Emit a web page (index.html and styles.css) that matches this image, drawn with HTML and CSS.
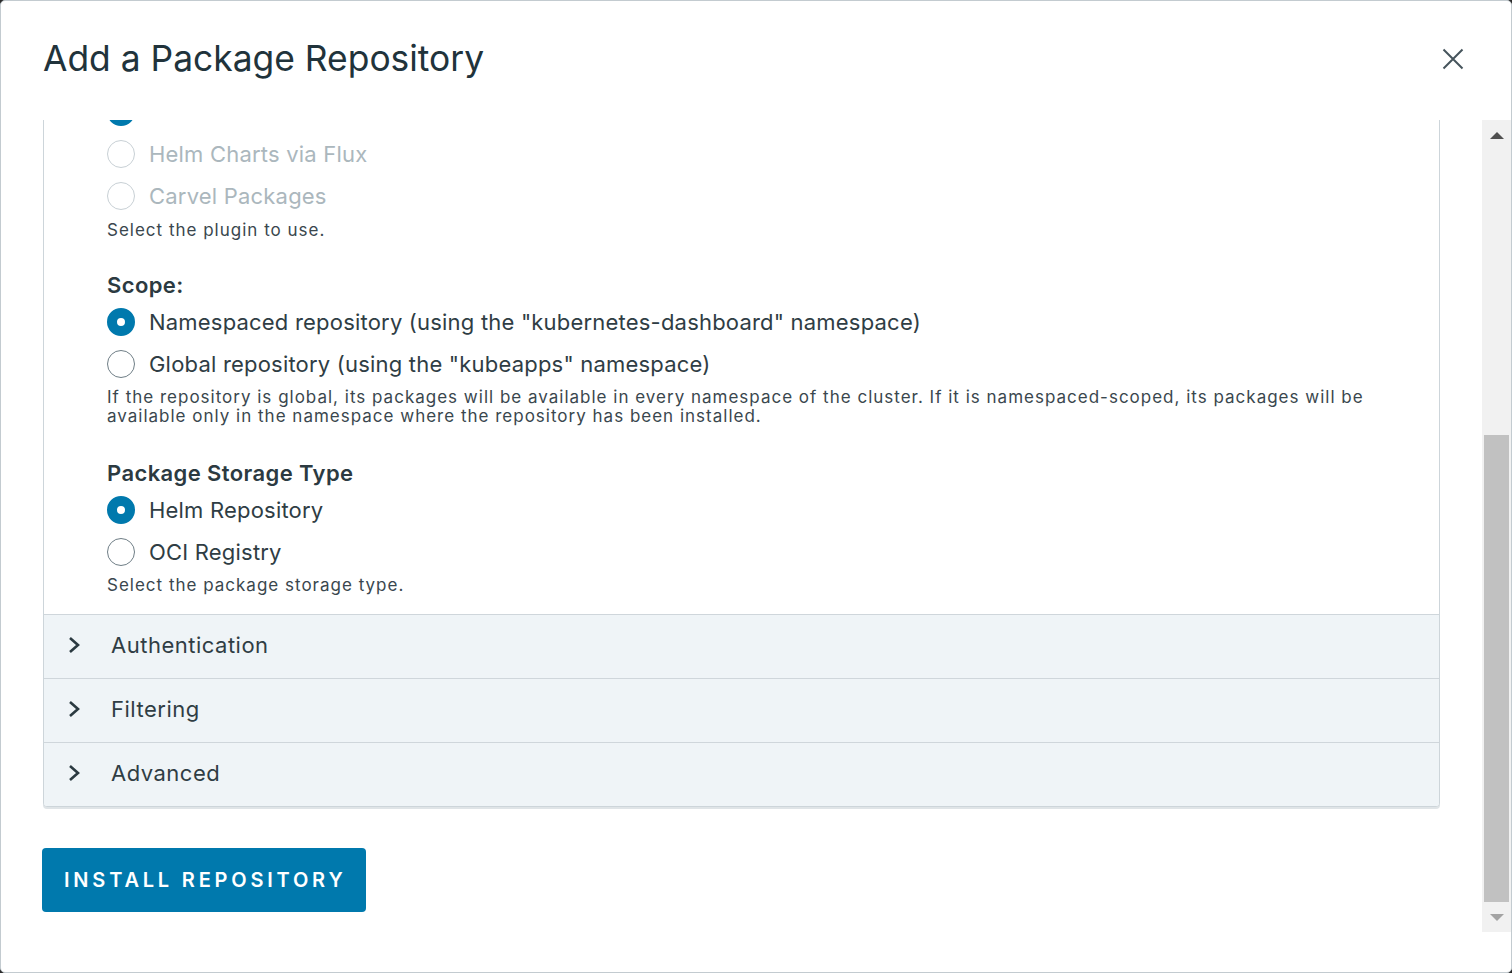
FILE: index.html
```html
<!DOCTYPE html>
<html lang="en">
<head>
<meta charset="utf-8">
<title>Add a Package Repository</title>
<link rel="stylesheet" href="styles.css">
</head>
<body>
<div class="modal">
  <header class="modal-header">
    <h1 class="modal-title">Add a Package Repository</h1>
    <button class="close" aria-label="Close">
      <svg width="24" height="24" viewBox="0 0 24 24"><path d="M2.5 2.5L21.5 21.5M21.5 2.5L2.5 21.5" stroke="#46545c" stroke-width="2" fill="none"/></svg>
    </button>
  </header>
  <div class="modal-body">
    <div class="viewport">
      <div class="scroll-content">
        <section class="card">
          <div class="card-block">
            <div class="options">
              <label class="radio-row"><span class="radio checked"></span><span class="radio-label">Helm Charts</span></label>
              <label class="radio-row"><span class="radio disabled"></span><span class="radio-label is-disabled">Helm Charts via Flux</span></label>
              <label class="radio-row"><span class="radio disabled"></span><span class="radio-label is-disabled">Carvel Packages</span></label>
            </div>
            <div class="helper">Select the plugin to use.</div>

            <div class="field-label scope-label">Scope:</div>
            <div class="options">
              <label class="radio-row"><span class="radio checked"></span><span class="radio-label">Namespaced repository (using the "kubernetes-dashboard" namespace)</span></label>
              <label class="radio-row"><span class="radio"></span><span class="radio-label">Global repository (using the "kubeapps" namespace)</span></label>
            </div>
            <div class="helper helper-wrap">If the repository is global, its packages will be available in every namespace of the cluster. If it is namespaced-scoped, its packages will be available only in the namespace where the repository has been installed.</div>

            <div class="field-label storage-label">Package Storage Type</div>
            <div class="options">
              <label class="radio-row"><span class="radio checked"></span><span class="radio-label">Helm Repository</span></label>
              <label class="radio-row"><span class="radio"></span><span class="radio-label">OCI Registry</span></label>
            </div>
            <div class="helper helper-last">Select the package storage type.</div>
          </div>

          <div class="acc-row">
            <svg class="chevron" width="12" height="18" viewBox="0 0 12 18"><path d="M2 2L10 9L2 16" stroke="#2b3a41" stroke-width="2.6" fill="none"/></svg>
            <span class="acc-title">Authentication</span>
          </div>
          <div class="acc-row">
            <svg class="chevron" width="12" height="18" viewBox="0 0 12 18"><path d="M2 2L10 9L2 16" stroke="#2b3a41" stroke-width="2.6" fill="none"/></svg>
            <span class="acc-title">Filtering</span>
          </div>
          <div class="acc-row">
            <svg class="chevron" width="12" height="18" viewBox="0 0 12 18"><path d="M2 2L10 9L2 16" stroke="#2b3a41" stroke-width="2.6" fill="none"/></svg>
            <span class="acc-title">Advanced</span>
          </div>
        </section>

        <button class="btn-primary">Install Repository</button>
      </div>
    </div>
    <div class="scrollbar">
      <div class="sb-btn"><span class="arrow-up"></span></div>
      <div class="sb-track"><div class="sb-thumb"></div></div>
      <div class="sb-btn"><span class="arrow-down"></span></div>
    </div>
  </div>
  <div class="modal-footer"></div>
</div>
</body>
</html>
```

FILE: styles.css
```css
html, body {
  margin: 0;
  padding: 0;
}

body {
  background: #2b2b2b;
  font-family: Inter, "Open Sans", sans-serif;
  color: #2f3d44;
}

.modal {
  box-sizing: border-box;
  height: 973px;
  border: 1px solid #c3cbd0;
  border-radius: 5px;
  background: #fff;
  display: flex;
  flex-direction: column;
  overflow: hidden;
}

.modal-header {
  box-sizing: border-box;
  height: 119px;
  flex: none;
  display: flex;
  align-items: center;
  justify-content: space-between;
  padding: 0 46px 4px 42px;
}

.modal-title {
  margin: 0;
  font-size: 35.4px;
  font-weight: 400;
  line-height: 46px;
  color: #21333b;
}

.close {
  width: 24px;
  height: 24px;
  border: 0;
  padding: 0;
  background: none;
  display: block;
}

.close svg {
  display: block;
}

.modal-body {
  flex: none;
  height: 812px;
  display: flex;
}

.viewport {
  flex: 1;
  overflow: hidden;
  padding: 0 42px;
}

.scroll-content {
  margin-top: -57px;
  display: flex;
  flex-direction: column;
  align-items: flex-start;
}

.card {
  align-self: stretch;
  border: 1px solid #cdd5da;
  border-radius: 4px;
  box-shadow: 0 2px 0 #dfe4e7;
  background: #fff;
  overflow: hidden;
}

.card-block {
  padding: 24px 24px 19px 63px;
}

.field-label {
  font-size: 22px;
  font-weight: 600;
  line-height: 26px;
  letter-spacing: 0.4px;
  color: #2c3a41;
}

.scope-label {
  margin-top: 32px;
}

.storage-label {
  margin-top: 34px;
}

.options {
  margin-top: 3px;
}

.radio-row {
  display: flex;
  align-items: center;
  gap: 14px;
  height: 42px;
}

.radio {
  box-sizing: border-box;
  width: 28px;
  height: 28px;
  border-radius: 50%;
  border: 1px solid #6f7e86;
  background: #fff;
  flex: none;
}

.radio.checked {
  border: 10px solid #0079ad;
}

.radio.disabled {
  border-color: #c8d0d5;
}

.radio-label {
  font-size: 22px;
  letter-spacing: 0.2px;
  color: #2f3d44;
}

.radio-label.is-disabled {
  color: #abb7bd;
}

.helper {
  margin-top: 3px;
  font-size: 17px;
  letter-spacing: 1px;
  line-height: 20px;
  color: #3a474e;
}

.helper-wrap {
  line-height: 19px;
}

.helper-last {
  margin-top: 2px;
}

.acc-row {
  box-sizing: border-box;
  height: 64px;
  border-top: 1px solid #cfd6db;
  background: #eff4f7;
  display: flex;
  align-items: center;
  gap: 31px;
  padding-left: 24px;
  padding-bottom: 3px;
}

.chevron {
  display: block;
  flex: none;
}

.acc-title {
  font-size: 22px;
  letter-spacing: 0.5px;
  color: #2f3d44;
}

.btn-primary {
  margin-top: 41px;
  margin-left: -1px;
  height: 64px;
  padding: 0 20px 0 22px;
  border: 0;
  border-radius: 4px;
  background: #0079ad;
  color: #fff;
  font-family: Inter, "Open Sans", sans-serif;
  font-size: 20px;
  font-weight: 600;
  letter-spacing: 3.8px;
  text-transform: uppercase;
}

.scrollbar {
  width: 29px;
  flex: none;
  background: #f1f1f1;
  display: flex;
  flex-direction: column;
}

.sb-btn {
  height: 30px;
  flex: none;
  display: flex;
  align-items: center;
  justify-content: center;
}

.arrow-up {
  width: 0;
  height: 0;
  border-left: 7px solid transparent;
  border-right: 7px solid transparent;
  border-bottom: 7px solid #505050;
}

.arrow-down {
  width: 0;
  height: 0;
  border-left: 7px solid transparent;
  border-right: 7px solid transparent;
  border-top: 7px solid #a3a3a3;
}

.sb-track {
  flex: 1;
  padding-top: 285px;
  box-sizing: border-box;
}

.sb-thumb {
  height: 467px;
  margin: 0 2px;
  background: #c1c1c1;
}

.modal-footer {
  flex: 1;
}
```
